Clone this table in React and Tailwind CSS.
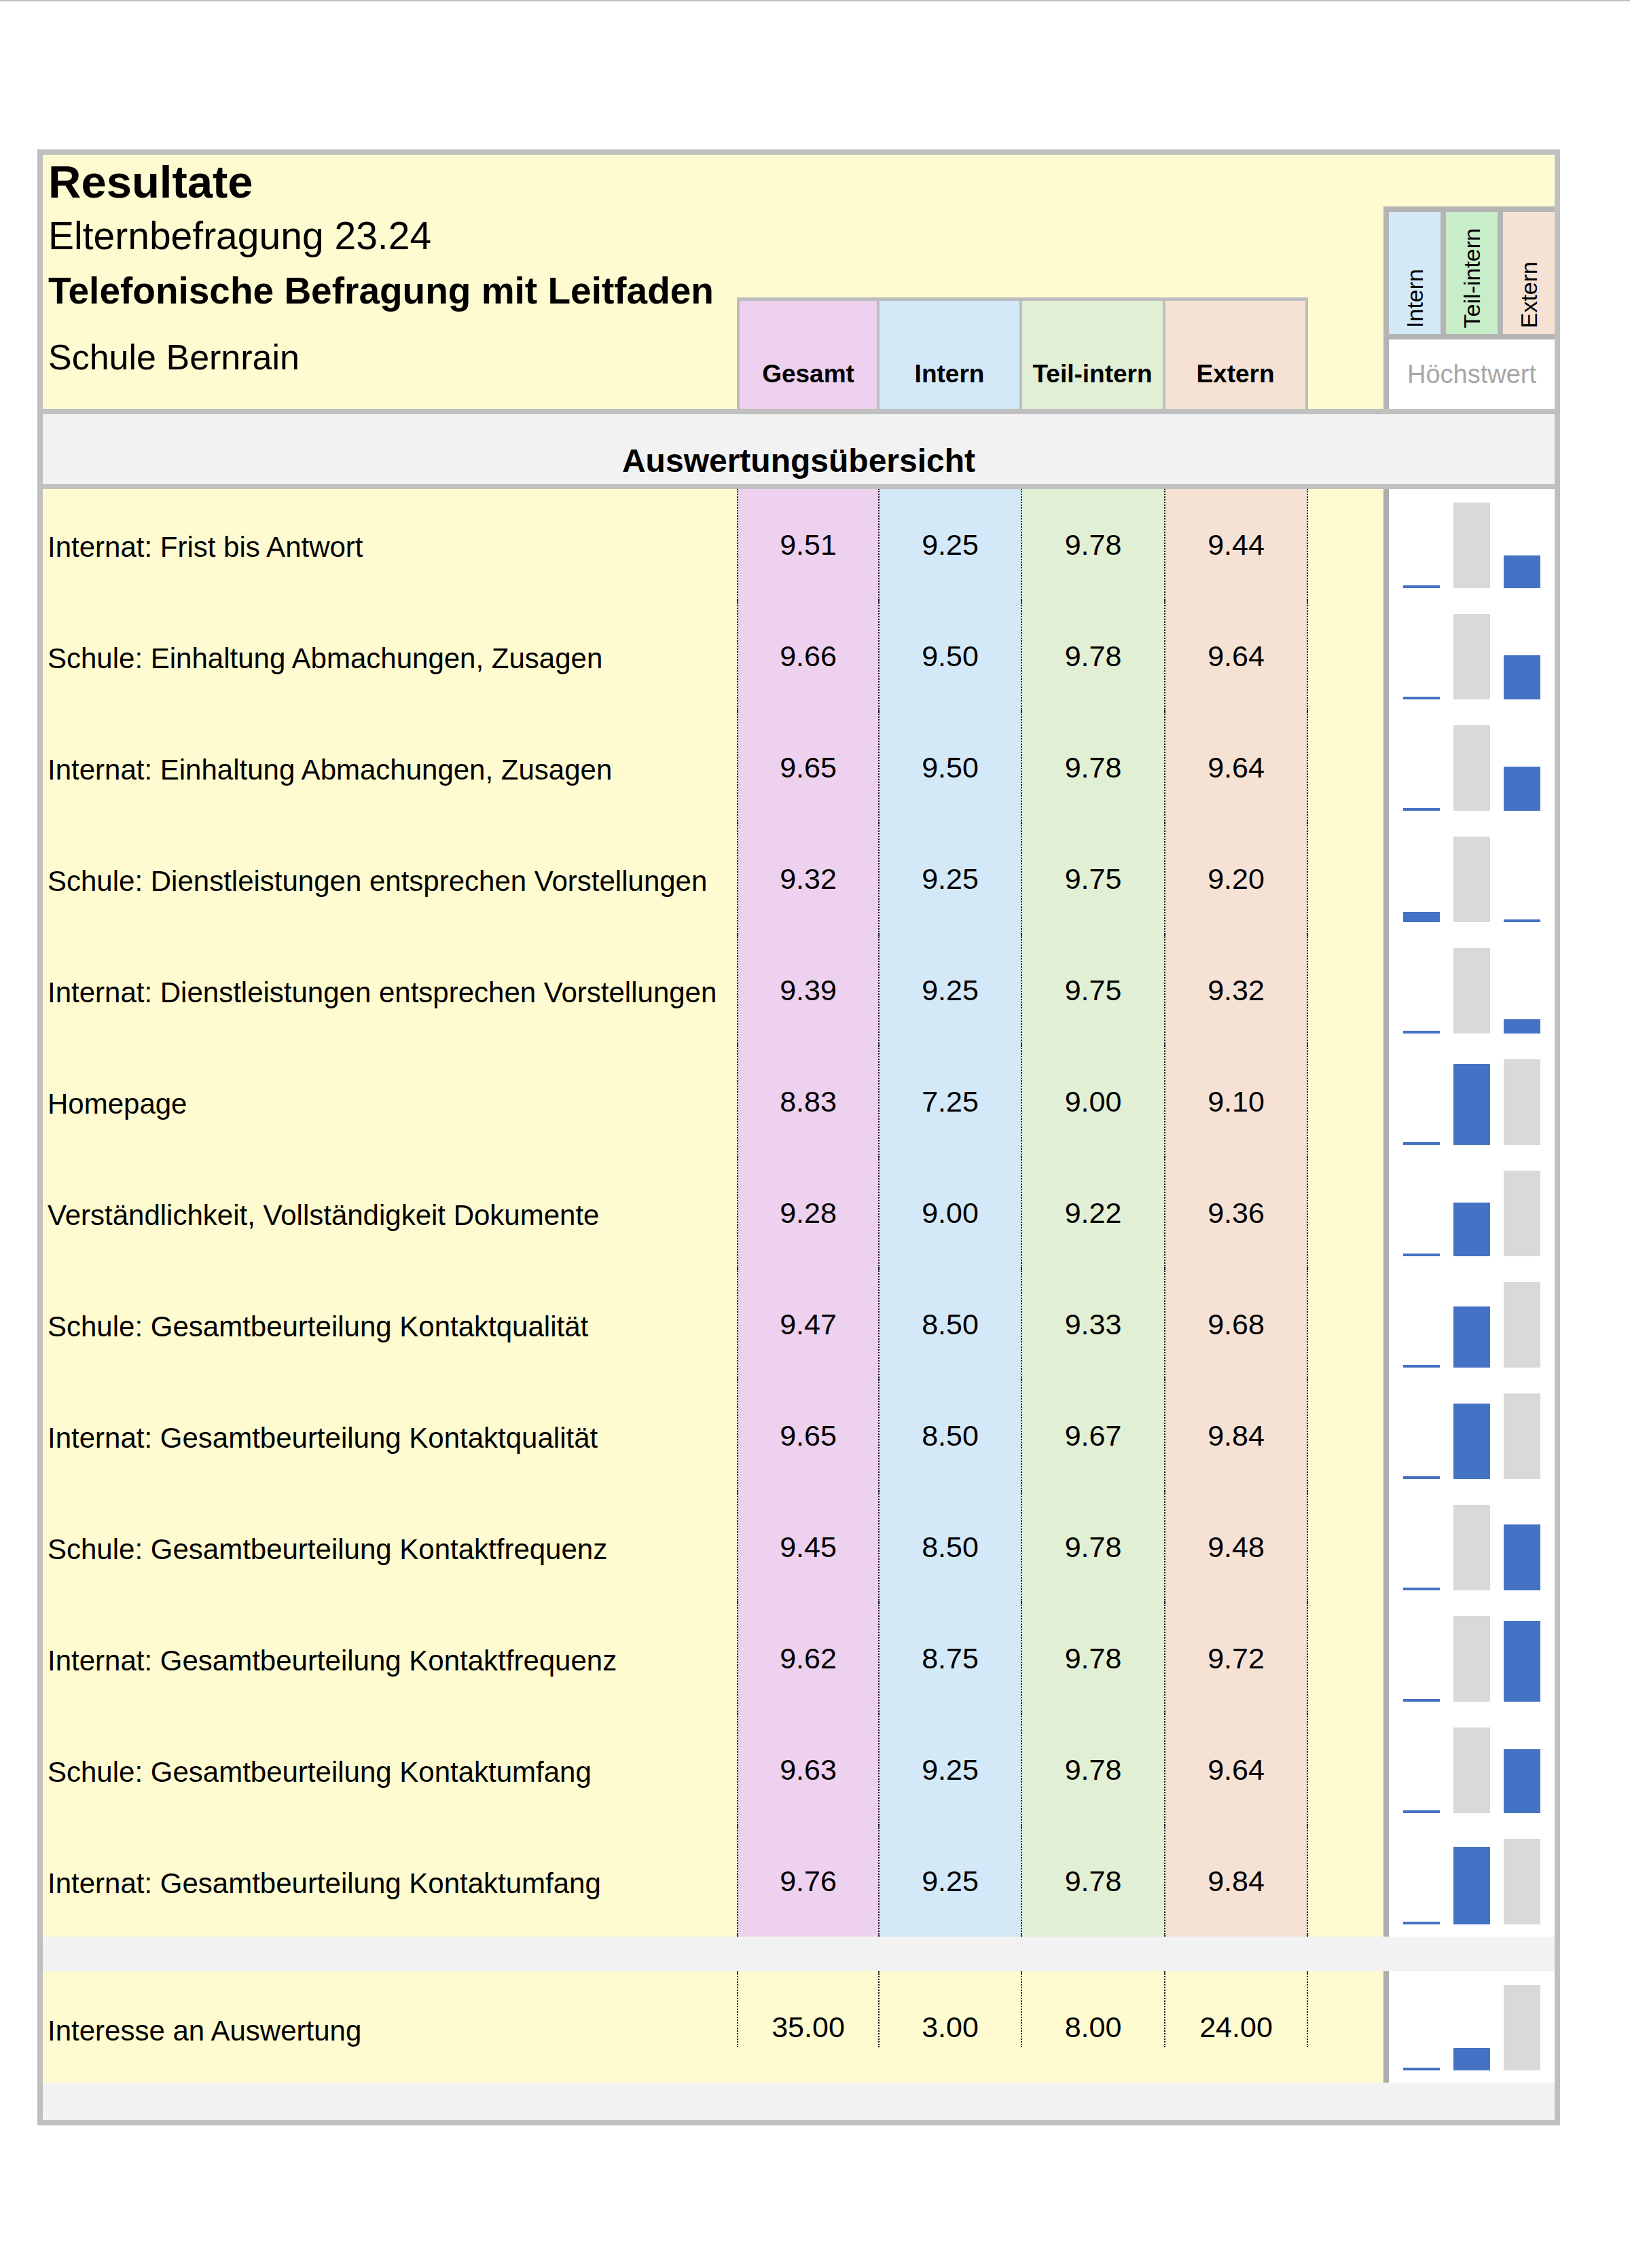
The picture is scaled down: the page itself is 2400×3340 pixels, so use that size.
const ROWS = [
  ["Internat: Frist bis Antwort", 9.51, 9.25, 9.78, 9.44],
  ["Schule: Einhaltung Abmachungen, Zusagen", 9.66, 9.5, 9.78, 9.64],
  ["Internat: Einhaltung Abmachungen, Zusagen", 9.65, 9.5, 9.78, 9.64],
  ["Schule: Dienstleistungen entsprechen Vorstellungen", 9.32, 9.25, 9.75, 9.2],
  ["Internat: Dienstleistungen entsprechen Vorstellungen", 9.39, 9.25, 9.75, 9.32],
  ["Homepage", 8.83, 7.25, 9.0, 9.1],
  ["Verständlichkeit, Vollständigkeit Dokumente", 9.28, 9.0, 9.22, 9.36],
  ["Schule: Gesamtbeurteilung Kontaktqualität", 9.47, 8.5, 9.33, 9.68],
  ["Internat: Gesamtbeurteilung Kontaktqualität", 9.65, 8.5, 9.67, 9.84],
  ["Schule: Gesamtbeurteilung Kontaktfrequenz", 9.45, 8.5, 9.78, 9.48],
  ["Internat: Gesamtbeurteilung Kontaktfrequenz", 9.62, 8.75, 9.78, 9.72],
  ["Schule: Gesamtbeurteilung Kontaktumfang", 9.63, 9.25, 9.78, 9.64],
  ["Internat: Gesamtbeurteilung Kontaktumfang", 9.76, 9.25, 9.78, 9.84],
];

const COLS = "grid grid-cols-[1022px_210px_210px_211px_210px_111px_252px]";
const VALUE_BG = ["bg-[#eed1ee]", "bg-[#d3e9f8]", "bg-[#e1efd5]", "bg-[#f6e2d5]"];

function MiniChart({ values }) {
  const min = Math.min(...values);
  const max = Math.max(...values);
  return (
    <div className="bg-white border-l-8 border-[#adadad] pt-[20px] pl-[21px]">
      <div className="flex items-end gap-[20px] h-[126px]">
        {values.map((v, i) => {
          const h = 4 + ((v - min) / (max - min)) * 122;
          return (
            <div
              key={i}
              className={`w-[54px] ${v === max ? "bg-[#d9d9d9]" : "bg-[#4472c4]"}`}
              style={{ height: `${h}px` }}
            />
          );
        })}
      </div>
    </div>
  );
}

function DataRow({ label, values }) {
  return (
    <div className={`${COLS} h-[164px]`}>
      <div className="bg-[#fefbd1] flex items-center pl-[7px] pt-[6px] text-[42px]">{label}</div>
      {values.map((v, i) => (
        <div
          key={i}
          className={`${VALUE_BG[i]} flex items-center justify-center text-[43px] border-r-2 border-dotted border-[#111] ${i === 0 ? "border-l-2" : ""}`}
        >
          {v.toFixed(2)}
        </div>
      ))}
      <div className="bg-[#fefbd1]" />
      <MiniChart values={values.slice(1)} />
    </div>
  );
}

function HeaderCell({ children, bg, first }) {
  return (
    <div
      className={`${bg} self-end h-[164px] border-t-[5px] border-r-4 border-[#bdbdbd] ${first ? "border-l-4" : ""} flex items-end justify-center pb-[30px] font-bold text-[37px] leading-[42px]`}
    >
      {children}
    </div>
  );
}

function LegendCell({ children, bg }) {
  return (
    <div className={`${bg} flex-1 flex items-end justify-center pb-[9px]`}>
      <span className="[writing-mode:vertical-rl] rotate-180 text-[34px] leading-none">{children}</span>
    </div>
  );
}

export default function App() {
  const interesse = [35, 3, 8, 24];
  return (
    <div className="min-h-[3340px] bg-white border-t-2 border-[#c0c0c0] pt-[218px] pl-[55px] font-['Liberation_Sans',Arial,sans-serif] text-black">
      <div className="w-[2242px] border-8 border-[#c0c0c0]">
        {/* header */}
        <div className={`${COLS} h-[382px] bg-[#fefbd1] border-b-8 border-[#c0c0c0]`}>
          <div className="pl-[8px] pt-[5px]">
            <div className="font-bold text-[67px] leading-[70px]">Resultate</div>
            <div className="mt-[9px] text-[57px] leading-[70px]">Elternbefragung 23.24</div>
            <div className="mt-[14px] font-bold text-[55px] leading-[64px]">Telefonische Befragung mit Leitfaden</div>
            <div className="mt-[36px] text-[52px] leading-[60px]">Schule Bernrain</div>
          </div>
          <HeaderCell bg="bg-[#eed1ee]" first>Gesamt</HeaderCell>
          <HeaderCell bg="bg-[#d3e9f8]">Intern</HeaderCell>
          <HeaderCell bg="bg-[#e1efd5]">Teil-intern</HeaderCell>
          <HeaderCell bg="bg-[#f6e2d5]">Extern</HeaderCell>
          <div />
          <div className="self-end h-[298px] border-l-8 border-t-8 border-[#b4b4b4] flex flex-col">
            <div className="h-[180px] flex gap-[8px] bg-[#b4b4b4]">
              <LegendCell bg="bg-[#d3e9f8]">Intern</LegendCell>
              <LegendCell bg="bg-[#c8edc9]">Teil-intern</LegendCell>
              <LegendCell bg="bg-[#f6e2d5]">Extern</LegendCell>
            </div>
            <div className="h-[8px] bg-[#b4b4b4]" />
            <div className="flex-1 bg-white flex items-center justify-center text-[38px] text-[#a6a6a6]">
              Höchstwert
            </div>
          </div>
        </div>

        {/* section title */}
        <div className="h-[110px] bg-[#f2f2f2] border-b-[7px] border-[#c0c0c0] flex items-end justify-center pb-[6px]">
          <span className="font-bold text-[48px] leading-[56px]">Auswertungsübersicht</span>
        </div>

        {ROWS.map(([label, ...values]) => (
          <DataRow key={label} label={label} values={values} />
        ))}

        <div className="h-[51px] bg-[#f2f2f2]" />

        <div className={`${COLS} h-[164px]`}>
          <div className="bg-[#fefbd1] flex items-center pl-[7px] pt-[10px] text-[42px]">Interesse an Auswertung</div>
          {interesse.map((v, i) => (
            <div key={i} className="bg-[#fefbd1]">
              <div
                className={`h-[112px] flex items-end justify-center pb-[6px] text-[43px] leading-[48px] border-r-2 border-dotted border-[#111] ${i === 0 ? "border-l-2" : ""}`}
              >
                {v.toFixed(2)}
              </div>
            </div>
          ))}
          <div className="bg-[#fefbd1]" />
          <MiniChart values={interesse.slice(1)} />
        </div>

        <div className="h-[55px] bg-[#f2f2f2]" />
      </div>
    </div>
  );
}
